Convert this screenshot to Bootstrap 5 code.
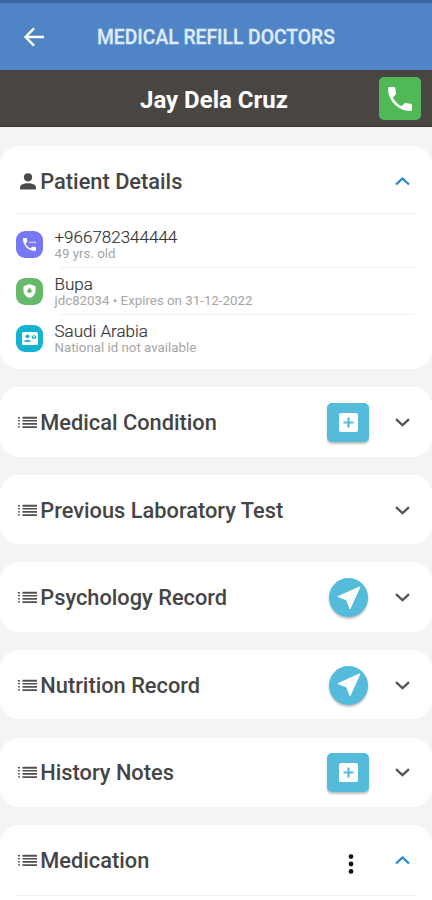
<!DOCTYPE html>
<html lang="en">
<head>
<meta charset="utf-8">
<meta name="viewport" content="width=device-width, initial-scale=1">
<title>Medical Refill Doctors</title>
<link href="https://cdn.jsdelivr.net/npm/bootstrap@5.3.0/dist/css/bootstrap.min.css" rel="stylesheet">
<style>
body{font-family:Roboto,"Liberation Sans",sans-serif;background:#f4f4f4;height:900px;overflow:hidden;line-height:1.2}
svg{display:block;flex:none}
.app-bar{height:70px;background:#4f85c6;border-top:3px solid #3c669d;padding-left:22px}
.app-title{font-size:19.3px;font-weight:500;color:#dfeafa;margin-left:51px;padding-top:2px;white-space:nowrap;-webkit-text-stroke:.3px #dfeafa}
.patient-bar{height:57px;background:#494543;border-bottom:1px solid #383432;padding:0 11px 0 140px}
.patient-name{font-size:24px;font-weight:700;padding-top:5px;white-space:nowrap}
.call-btn{width:42px;height:43px;background:#4fb957;border-radius:5px;padding-top:2px}
.page-body{padding-top:18.5px}
.panel{background:#fff;border-radius:19px;margin-bottom:18.1px}
.panel-head{height:69.5px;padding:1px 22px 0 18px}
.panel-details .panel-head{height:67.5px;padding-top:3.5px}
.panel-title{font-size:21.8px;font-weight:500;color:#454545;white-space:nowrap;padding-top:1.5px}
.title-icon{width:22.3px}
.toggle-icon{margin-left:26px}
.menu-icon{margin-right:15.5px}
.head-rule{height:1px;background:#f1f1f1;margin:0 16px}
.info-list{padding:7px 0 8.1px}
.info{height:46px;padding-left:16px}
.tile{width:27px;height:27px;border-radius:9px;flex:none}
.tile-phone{background:#7678f5}
.tile-shield{background:#65b968}
.tile-card{background:#15b3d3}
.info-body{margin-left:11.5px;height:46px;padding-top:6.5px}
.info-line{font-size:17px;line-height:18.5px;color:#333;font-weight:300;-webkit-text-stroke:.15px #333}
.info-sub{font-size:13.3px;line-height:15px;color:#a6a6a6;font-weight:400}
.info-rule{height:1px;background:#f1f1f1;margin:0 17px 0 60px}
.act{width:42px;height:39px;background:#54bbda;border-radius:5px;box-shadow:0 2px 2px rgba(0,0,0,.25)}
.act-round{width:39px;border-radius:50%;margin-right:1px}
</style>
</head>
<body>
<svg class="d-none" xmlns="http://www.w3.org/2000/svg">
<symbol id="list" viewBox="0 0 19 13"><path fill="#505050" d="M0 1h2v1.500H0zM4.500 .8H19v1.900H4.500zM0 4.100h2v1.200H0zM4.500 4H19v1.600H4.500zM0 7.200h2v1.300H0zM4.500 7.100H19v1.700H4.500zM0 10.300h2v1.300H0zM4.500 10.200H19v1.700H4.500z"/></symbol>
<symbol id="down" viewBox="0 0 15 9"><path fill="none" stroke="#555" stroke-width="2.300" d="M1 1.200 7.500 7.200 14 1.200"/></symbol>
<symbol id="up" viewBox="0 0 15 9"><path fill="none" stroke="#2489d6" stroke-width="2.300" d="M1 7.500 7.500 1.500 14 7.500"/></symbol>
<symbol id="add" viewBox="0 0 19 19"><rect width="19" height="19" rx="2" fill="#fff"/><path stroke="#54bbda" stroke-width="2.200" d="M9.500 4.500v10M4.500 9.500h10"/></symbol>
<symbol id="send" viewBox="0 0 24 24"><path fill="#fff" stroke="#fff" stroke-linejoin="round" d="M23 .8 13 22.800 9.600 14 1 10.600z"/></symbol>
<symbol id="phone" viewBox="3 3 18 18"><path fill="#fff" d="M6.620 10.790c1.440 2.830 3.760 5.140 6.590 6.590l2.200-2.200c.27-.27.67-.36 1.020-.24 1.120.37 2.330.57 3.570.57.55 0 1 .45 1 1V20c0 .55-.45 1-1 1-9.390 0-17-7.610-17-17 0-.55.45-1 1-1h3.500c.55 0 1 .45 1 1 0 1.250.2 2.450.57 3.570.11.35.03.74-.25 1.020z"/></symbol>
</svg>

<header class="app-bar d-flex align-items-center">
<svg width="24" height="20" viewBox="0 0 24 20"><path fill="none" stroke="#fff" stroke-width="2.400" d="M22 10H4M12 1.300 3.500 10 12 18.700"/></svg>
<div class="app-title">MEDICAL REFILL DOCTORS</div>
</header>
<div class="patient-bar d-flex align-items-center justify-content-between">
<div class="patient-name text-white">Jay Dela Cruz</div>
<div class="call-btn d-flex align-items-center justify-content-center"><svg width="24" height="24"><use href="#phone"/></svg></div>
</div>

<main class="page-body">
<section class="panel panel-details">
<div class="panel-head d-flex align-items-center">
<div class="title-icon"><svg width="19" height="17" viewBox="0 0 19 17"><g fill="#4a4a4a"><circle cx="10" cy="4.300" r="4.100"/><path d="M2 16.500v-2.200c0-2.600 4.500-4 8-4s8 1.400 8 4v2.200z"/></g></svg></div>
<div class="panel-title">Patient Details</div>
<svg class="ms-auto" width="15" height="9"><use href="#up"/></svg>
</div>
<div class="head-rule"></div>
<div class="info-list">
<div class="info d-flex align-items-center">
<div class="tile tile-phone d-flex align-items-center justify-content-center"><svg width="13" height="13" viewBox="0 0 18 18"><path fill="#fff" d="M3.600 7.800c1.500 2.800 3.800 5.100 6.600 6.600l2.200-2.200c.3-.3.700-.4 1-.2 1.100.4 2.300.6 3.600.6.500 0 1 .4 1 1V17c0 .6-.5 1-1 1C7.600 18 0 10.400 0 1c0-.6.400-1 1-1h3.500c.5 0 1 .4 1 1 0 1.200.2 2.500.6 3.600.1.300 0 .7-.3 1z"/><path stroke="#fff" stroke-width="1.500" opacity=".8" d="M8.500 6H18"/></svg></div>
<div class="info-body"><div class="info-line">+966782344444</div><div class="info-sub">49 yrs. old</div></div>
</div>
<div class="info-rule"></div>
<div class="info d-flex align-items-center">
<div class="tile tile-shield d-flex align-items-center justify-content-center"><svg width="13" height="14" viewBox="0 0 13 14"><path fill="#fff" d="M6.500 0 12.500 2.300V7c0 3.200-2.600 6-6 7-3.400-1-6-3.800-6-7V2.300z"/><path fill="#65b968" d="M6.500 3.800 9 6.800 7.800 8.800H5.200L4 6.800z"/></svg></div>
<div class="info-body"><div class="info-line">Bupa</div><div class="info-sub">jdc82034 • Expires on 31-12-2022</div></div>
</div>
<div class="info-rule"></div>
<div class="info d-flex align-items-center">
<div class="tile tile-card d-flex align-items-center justify-content-center"><svg width="16" height="13" viewBox="0 0 16 13"><rect width="16" height="13" rx="1.500" fill="#fff"/><g fill="#15b3d3"><circle cx="5.500" cy="4.300" r="1.900"/><path d="M2 9.800C2 6.900 9 6.900 9 9.800zM10 3h4v3.500h-4z"/></g><path stroke="#fff" fill="none" d="m10 3 2 1.700L14 3"/></svg></div>
<div class="info-body"><div class="info-line">Saudi Arabia</div><div class="info-sub">National id not available</div></div>
</div>
</div>
</section>

<section class="panel"><div class="panel-head d-flex align-items-center"><div class="title-icon"><svg width="19" height="13"><use href="#list"/></svg></div><div class="panel-title">Medical Condition</div><div class="act ms-auto d-flex align-items-center justify-content-center"><svg width="19" height="19"><use href="#add"/></svg></div><svg class="toggle-icon" width="15" height="9"><use href="#down"/></svg></div></section>
<section class="panel"><div class="panel-head d-flex align-items-center"><div class="title-icon"><svg width="19" height="13"><use href="#list"/></svg></div><div class="panel-title">Previous Laboratory Test</div><svg class="ms-auto" width="15" height="9"><use href="#down"/></svg></div></section>
<section class="panel"><div class="panel-head d-flex align-items-center"><div class="title-icon"><svg width="19" height="13"><use href="#list"/></svg></div><div class="panel-title">Psychology Record</div><div class="act act-round ms-auto d-flex align-items-center justify-content-center"><svg width="24" height="24"><use href="#send"/></svg></div><svg class="toggle-icon" width="15" height="9"><use href="#down"/></svg></div></section>
<section class="panel"><div class="panel-head d-flex align-items-center"><div class="title-icon"><svg width="19" height="13"><use href="#list"/></svg></div><div class="panel-title">Nutrition Record</div><div class="act act-round ms-auto d-flex align-items-center justify-content-center"><svg width="24" height="24"><use href="#send"/></svg></div><svg class="toggle-icon" width="15" height="9"><use href="#down"/></svg></div></section>
<section class="panel"><div class="panel-head d-flex align-items-center"><div class="title-icon"><svg width="19" height="13"><use href="#list"/></svg></div><div class="panel-title">History Notes</div><div class="act ms-auto d-flex align-items-center justify-content-center"><svg width="19" height="19"><use href="#add"/></svg></div><svg class="toggle-icon" width="15" height="9"><use href="#down"/></svg></div></section>
<section class="panel mb-0 pb-4"><div class="panel-head d-flex align-items-center"><div class="title-icon"><svg width="19" height="13"><use href="#list"/></svg></div><div class="panel-title">Medication</div><svg class="menu-icon ms-auto mt-2" width="6" height="20" viewBox="0 0 6 20"><g fill="#111"><circle cx="3" cy="2.600" r="2.400"/><circle cx="3" cy="10" r="2.400"/><circle cx="3" cy="17.400" r="2.400"/></g></svg><svg class="toggle-icon" width="15" height="9"><use href="#up"/></svg></div><div class="head-rule"></div></section>
</main>
<script src="https://cdn.jsdelivr.net/npm/bootstrap@5.3.0/dist/js/bootstrap.bundle.min.js"></script>
</body>
</html>
